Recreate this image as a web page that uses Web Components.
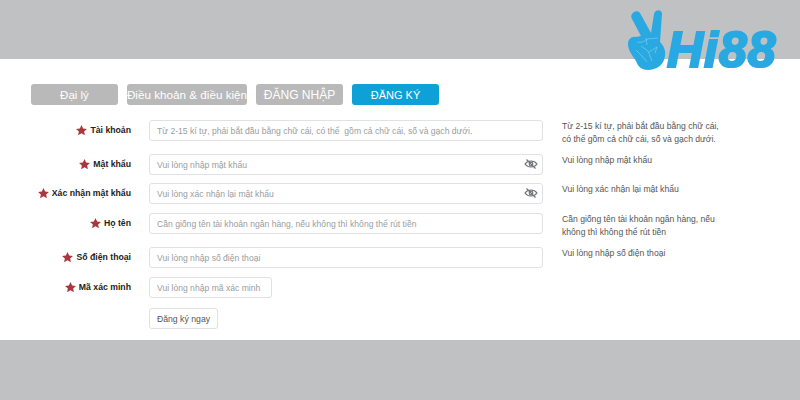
<!DOCTYPE html>
<html lang="vi">
<head>
<meta charset="utf-8">
<title>Hi88 - Đăng ký</title>
<style>
  html, body { margin: 0; padding: 0; }
  body { width: 800px; height: 400px; overflow: hidden; background: #c0c1c3; font-family: "Liberation Sans", Arial, sans-serif; }
</style>
</head>
<body>
<register-page>
  <site-logo slot="logo"></site-logo>
  <tab-button style="font-size:11.500px">Đại lý</tab-button>
  <tab-button wide style="font-size:11.700px">Điều khoản &amp; điều kiện</tab-button>
  <tab-button>ĐĂNG NHẬP</tab-button>
  <tab-button active style="font-size:11px">ĐĂNG KÝ</tab-button>

  <form-field slot="fields" style="height:34px" label="Tài khoản" placeholder="Từ 2-15 kí tự, phải bắt đầu bằng chữ cái, có thể  gồm cả chữ cái, số và gạch dưới.">Từ 2-15 kí tự, phải bắt đầu bằng chữ cái,<br>có thể gồm cả chữ cái, số và gạch dưới.</form-field>
  <form-field slot="fields" style="height:29px" label="Mật khẩu" placeholder="Vui lòng nhập mật khẩu" eye>Vui lòng nhập mật khẩu</form-field>
  <form-field slot="fields" style="height:30px" label="Xác nhận mật khẩu" placeholder="Vui lòng xác nhận lại mật khẩu" eye>Vui lòng xác nhận lại mật khẩu</form-field>
  <form-field slot="fields" style="height:34px" label="Họ tên" placeholder="Cần giống tên tài khoản ngân hàng, nếu không thì không thể rút tiền">Cần giống tên tài khoản ngân hàng, nếu<br>không thì không thể rút tiền</form-field>
  <form-field slot="fields" style="height:30px" label="Số điện thoại" placeholder="Vui lòng nhập số điện thoại">Vui lòng nhập số điện thoại</form-field>
  <form-field slot="fields" style="height:31px" label="Mã xác minh" placeholder="Vui lòng nhập mã xác minh" short></form-field>
  <submit-button slot="fields">Đăng ký ngay</submit-button>
</register-page>

<script>
class RegisterPage extends HTMLElement {
  constructor() {
    super();
    this.attachShadow({ mode: "open" });
    this.shadowRoot.innerHTML = `
      <style>
        :host { display: block; position: relative; width: 800px; height: 400px; filter: blur(0.3px); }
        .band { height: 59px; }
        .panel {
          height: 281px;
          box-sizing: border-box;
          background: #fff;
          padding: 25px 0 0 31px;
        }
        .tabs { display: flex; gap: 9px; height: 21px; margin-bottom: 15px; }
        .fields { display: flex; flex-direction: column; }
      </style>
      <div class="band"></div>
      <div class="panel">
        <div class="tabs"><slot></slot></div>
        <div class="fields"><slot name="fields"></slot></div>
      </div>
      <slot name="logo"></slot>
    `;
  }
}

class SiteLogo extends HTMLElement {
  constructor() {
    super();
    this.attachShadow({ mode: "open" });
    this.shadowRoot.innerHTML = `
      <style>
        :host { position: absolute; left: 626px; top: 8px; width: 156px; height: 66px; display: block; }
        svg { position: absolute; left: 0; top: 0; }
        .word {
          position: absolute;
          left: 41px;
          top: 12px;
          font: italic 700 50px/60px "Liberation Sans", Arial, sans-serif;
          letter-spacing: 1px;
          color: #29a9e1;
          -webkit-text-stroke: 2.2px #29a9e1;
          white-space: nowrap;
        }
      </style>
      <div class="word">Hi88</div>
      <svg width="42" height="64" viewBox="626 8 42 64">
        <path fill="#29a9e1" d="M631.500 18C630 13 637 9 640 13L651 33 654 14C655 9 662 9 662 14L660 42C664 46 666 51 665 56 664 65 656 70 648 70 642 70 638 67 636 61 632 55 628 50 628 44 628 39 632 36 636 37L641 36Z"/>
        <path fill="none" stroke="#9ed6f1" stroke-width=".5" d="M637 42c4 1 7 0 10-3l11-1M636 50l6 6 5 6M641 46l7 5 4 10M649 52l8-5-2 6M646 38l1 7"/>
      </svg>
    `;
  }
}

class TabButton extends HTMLElement {
  constructor() {
    super();
    this.attachShadow({ mode: "open" });
    this.shadowRoot.innerHTML = `
      <style>
        :host {
          display: flex;
          align-items: center;
          justify-content: center;
          box-sizing: border-box;
          width: 87px;
          height: 21px;
          border-radius: 3px;
          background: #b9b9b9;
          color: #fff;
          font-size: 12px;
          white-space: nowrap;
        }
        :host([wide]) { width: 120px; }
        :host([active]) { background: #0ea1d8; }
      </style>
      <slot></slot>
    `;
  }
}

class FormField extends HTMLElement {
  constructor() {
    super();
    this.attachShadow({ mode: "open" });
    const eye = this.hasAttribute("eye")
      ? `<svg class="eye" width="14" height="12" viewBox="0 0 14 12" fill="none" stroke="#6f7477" stroke-width="1.2"><path d="M1 6c3-4 9-4 12 0-3 4-9 4-12 0z"/><circle cx="7" cy="6" r="1.8"/><path d="M2.500 1.500l9 9"/></svg>`
      : "";
    this.shadowRoot.innerHTML = `
      <style>
        :host { display: flex; align-items: flex-start; }
        .label {
          width: 100px;
          height: 20px;
          display: flex;
          align-items: center;
          justify-content: flex-end;
          gap: 3px;
          font-size: 8.700px;
          font-weight: 700;
          color: #222;
          white-space: nowrap;
        }
        .star { color: #a8383d; flex: none; }
        .box {
          position: relative;
          margin-left: 18px;
          width: 394px;
          height: 21px;
          flex: none;
          box-sizing: border-box;
          border: 1px solid #dfe1e3;
          border-radius: 3px;
          display: flex;
          align-items: center;
          padding: 0 7px;
          font-size: 8.600px;
          color: #9a9da0;
        }
        .box span { white-space: pre; }
        :host([short]) .box { width: 123px; }
        .eye { position: absolute; right: 4px; top: 3px; }
        .hint {
          margin-left: 19px;
          font-size: 8.600px;
          line-height: 13px;
          color: #555;
          white-space: nowrap;
        }
      </style>
      <div class="label">
        <svg class="star" width="11" height="10" viewBox="0 0 24 22"><path fill="#a8383d" d="M12 0l3.600 7.600 8.400 1-6.200 5.700 1.700 8.200-7.500-4.200-7.500 4.200 1.700-8.200L0 8.600l8.400-1z"/></svg>
        <span>${this.getAttribute("label")}</span>
      </div>
      <div class="box"><span>${this.getAttribute("placeholder")}</span>${eye}</div>
      <div class="hint"><slot></slot></div>
    `;
  }
}

class SubmitButton extends HTMLElement {
  constructor() {
    super();
    this.attachShadow({ mode: "open" });
    this.shadowRoot.innerHTML = `
      <style>
        :host {
          display: flex;
          align-items: center;
          justify-content: center;
          box-sizing: border-box;
          margin-left: 118px;
          width: 69px;
          height: 21px;
          border: 1px solid #dfe1e3;
          border-radius: 3px;
          font-size: 8.700px;
          color: #555;
          white-space: nowrap;
        }
      </style>
      <slot></slot>
    `;
  }
}

customElements.define("register-page", RegisterPage);
customElements.define("site-logo", SiteLogo);
customElements.define("tab-button", TabButton);
customElements.define("form-field", FormField);
customElements.define("submit-button", SubmitButton);
</script>
</body>
</html>
